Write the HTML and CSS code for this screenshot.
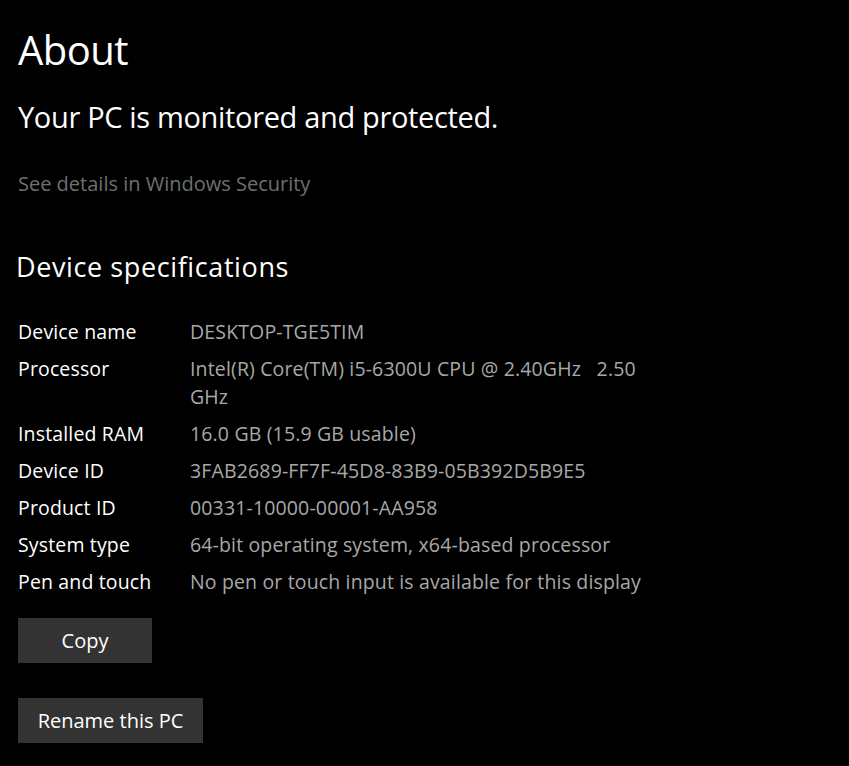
FILE: index.html
```html
<!DOCTYPE html>
<html lang="en">
<head>
<meta charset="utf-8">
<title>About</title>
<link rel="stylesheet" href="styles.css">
</head>
<body>
<main class="page">
  <h1 class="title">About</h1>
  <p class="status">Your PC is monitored and protected.</p>
  <a class="link" href="#">See details in Windows Security</a>

  <h2 class="section">Device specifications</h2>
  <dl class="specs">
    <div class="row"><dt>Device name</dt><dd>DESKTOP-TGE5TIM</dd></div>
    <div class="row"><dt>Processor</dt><dd>Intel(R) Core(TM) i5-6300U CPU @ 2.40GHz&nbsp;&nbsp; 2.50 GHz</dd></div>
    <div class="row"><dt>Installed RAM</dt><dd>16.0 GB (15.9 GB usable)</dd></div>
    <div class="row"><dt>Device ID</dt><dd>3FAB2689-FF7F-45D8-83B9-05B392D5B9E5</dd></div>
    <div class="row"><dt>Product ID</dt><dd>00331-10000-00001-AA958</dd></div>
    <div class="row"><dt>System type</dt><dd>64-bit operating system, x64-based processor</dd></div>
    <div class="row"><dt>Pen and touch</dt><dd>No pen or touch input is available for this display</dd></div>
  </dl>

  <div class="actions">
    <button class="btn btn-copy" type="button">Copy</button>
    <button class="btn btn-rename" type="button">Rename this PC</button>
  </div>
</main>
</body>
</html>
```

FILE: styles.css
```css
html, body {
  margin: 0;
  padding: 0;
  background: #000;
}

body {
  font-family: "Open Sans", "Noto Sans", sans-serif;
  color: #fff;
  width: 849px;
  height: 766px;
  overflow: hidden;
}

.page {
  padding: 22px 0 0 18px;
  display: flex;
  flex-direction: column;
  align-items: flex-start;
}

.title {
  margin: 0;
  font-size: 40px;
  font-weight: 400;
  line-height: 56px;
  letter-spacing: -0.5px;
}

.status {
  margin: 19px 0 0;
  font-size: 29px;
  font-weight: 400;
  line-height: 40px;
  letter-spacing: -0.34px;
}

.link {
  margin-top: 33px;
  font-size: 20px;
  line-height: 28px;
  color: #6f6f6f;
  text-decoration: none;
  letter-spacing: 0;
}

.section {
  margin: 50px 0 0 -2px;
  font-size: 27px;
  font-weight: 400;
  line-height: 38px;
  letter-spacing: 0.6px;
}

.specs {
  margin: 32px 0 0;
  display: flex;
  flex-direction: column;
  gap: 9px;
  font-size: 19.5px;
  line-height: 28px;
  letter-spacing: 0.15px;
}

.row {
  display: grid;
  grid-template-columns: 172px 466px;
}

.row dt {
  color: #fff;
}

.row dd {
  margin: 0;
  color: #a8a8a8;
}

.actions {
  margin-top: 22px;
  display: flex;
  flex-direction: column;
  align-items: flex-start;
  gap: 35px;
}

.btn {
  background: #333;
  color: #fff;
  border: none;
  height: 45px;
  padding: 0;
  font-family: inherit;
  font-size: 20px;
  letter-spacing: 0;
}

.btn-copy {
  width: 134px;
}

.btn-rename {
  width: 185px;
}
```
